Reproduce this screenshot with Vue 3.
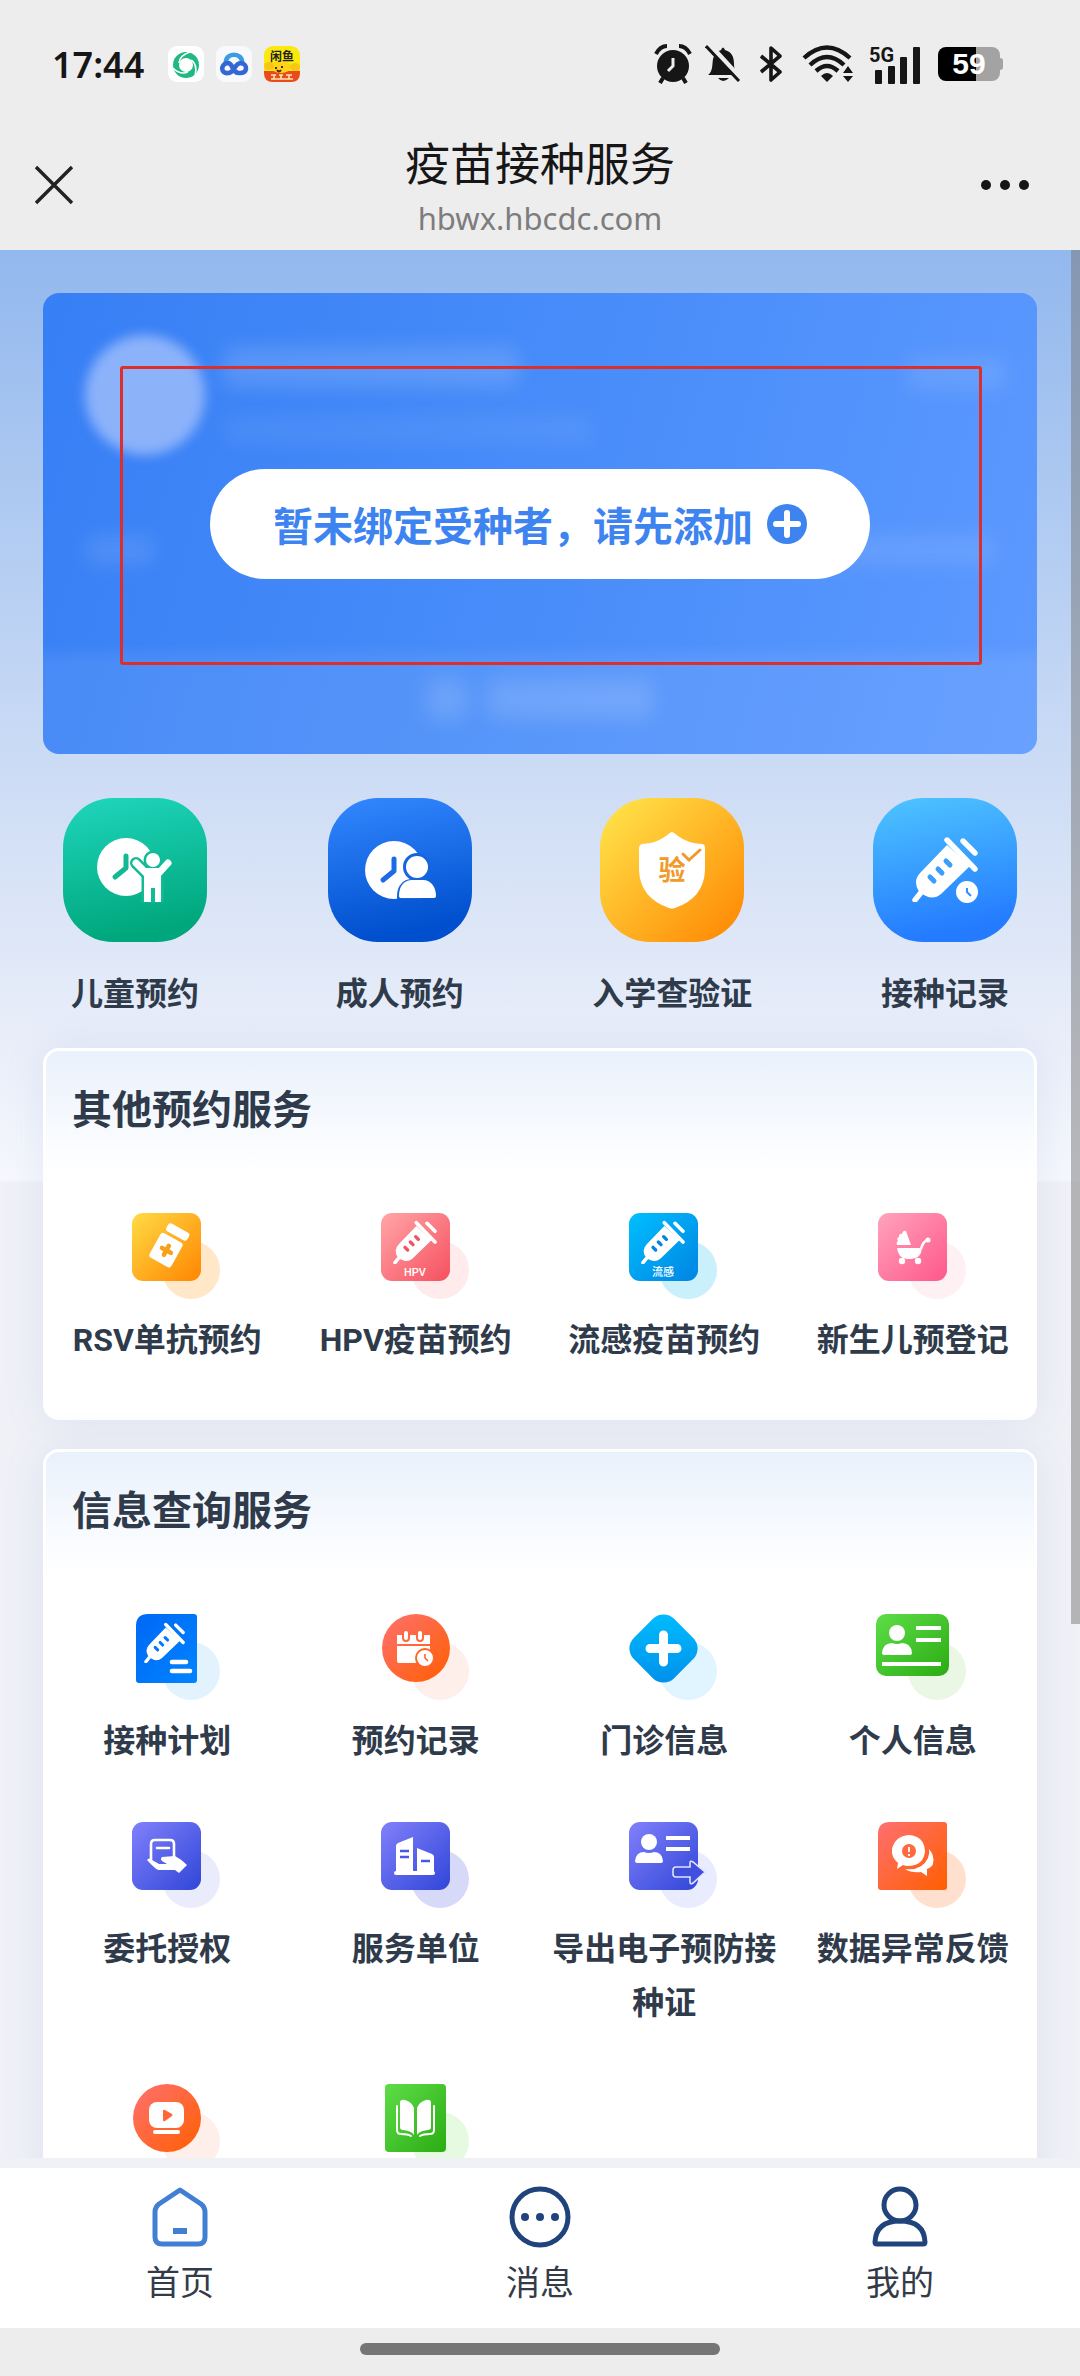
<template>
  <div class="phone">
    <header class="top">
      <div class="status-bar">
        <div class="status-left">
          <span class="time">17:44</span>
          <svg class="app-icon" viewBox="0 0 36 36">
            <rect width="36" height="36" rx="9" fill="#fff" />
            <circle cx="18" cy="19" r="10" fill="none" stroke="#1fb981" stroke-width="6" />
            <g stroke="#fff" stroke-width="1.6" fill="none">
              <path d="M11 17Q12 9 22 6" />
              <path d="M11 17Q12 9 22 6" transform="rotate(120 18 19)" />
              <path d="M11 17Q12 9 22 6" transform="rotate(240 18 19)" />
            </g>
          </svg>
          <svg class="app-icon" viewBox="0 0 36 36">
            <rect width="36" height="36" rx="9" fill="#f8f9fc" />
            <g fill="none" stroke-width="4.6" stroke-linecap="round">
              <path d="M10 17C9 6 27 6 26 17" stroke="#3d9be4" />
              <path d="M23 27C15 27 18 16 11 17C4 19 5 28 12 27C19 27 18 17 25 17C32 18 32 28 23 27" stroke="#3567d3" />
            </g>
          </svg>
          <svg class="app-icon" viewBox="0 0 36 36">
            <rect width="36" height="36" rx="9" fill="#fbe90d" />
            <path d="M0 25H36V27Q36 36 27 36H9Q0 36 0 27Z" fill="#ea4b1d" />
            <ellipse cx="17" cy="21" rx="10" ry="6" fill="#ffd21c" />
            <ellipse cx="5" cy="20" rx="5" ry="4" fill="#f8c713" />
            <ellipse cx="31" cy="21" rx="5" ry="4" fill="#f8c713" />
            <path d="M12 21v2M18 20v2M13 24q2 3 4 0" stroke="#4b2d07" stroke-width="2" fill="none" />
            <path d="M7 29h5M7 33h22M15 29h4M22 29h6M10 29v4M17 29v4M25 29v4" stroke="#ffe4b0" stroke-width="1.6" />
            <text x="18" y="15" text-anchor="middle" class="mini-text dark">闲鱼</text>
          </svg>
        </div>
        <div class="status-right">
          <svg width="38" height="40" viewBox="0 0 38 40">
            <circle cx="19" cy="22" r="16" fill="#161616" />
            <path d="M2 10Q6 2 13 2M36 10Q32 2 25 2" stroke="#161616" stroke-width="4" fill="none" />
            <path d="M9 34L6 39M29 34L32 39" stroke="#161616" stroke-width="4" />
            <path d="M19 14V22L14 27" stroke="#ededed" stroke-width="3" fill="none" />
          </svg>
          <svg width="37" height="40" viewBox="0 0 37 40">
            <path d="M3 31C8 27 7 21 8 15C10 8 14 7 16 6Q18 1 20 6C27 8 29 13 29 20C29 26 31 28 34 31Z" fill="#161616" />
            <path d="M13 34H24Q18 40 13 34Z" fill="#161616" />
            <path d="M4 0L37 36" stroke="#ededed" stroke-width="5" />
            <path d="M1 2L34 37" stroke="#161616" stroke-width="3" />
          </svg>
          <svg class="bluetooth" width="24" height="40" viewBox="0 0 24 40">
            <path d="M2 12L21 28L12 36V4L21 12L2 28" fill="none" stroke="#161616" stroke-width="3.6" stroke-linejoin="round" />
          </svg>
          <svg width="52" height="38" viewBox="0 0 52 38">
            <g fill="none" stroke="#161616" stroke-width="4.4">
              <path d="M2 13Q25 -8 48 13" />
              <path d="M8 20Q25 4 42 20" />
              <path d="M14 26Q25 16 36 26" />
            </g>
            <path d="M19 31Q25 25 31 31L25 37Z" fill="#161616" />
            <path d="M46 21L51 28H41ZM46 37L51 31H41Z" fill="#161616" />
          </svg>
          <svg width="54" height="44" viewBox="-2 -3 54 44">
            <text x="0" y="17" class="net-text">5G</text>
            <rect x="6" y="25" width="7" height="14" rx="1" fill="#161616" />
            <rect x="19" y="21" width="7" height="18" rx="1" fill="#161616" />
            <rect x="31" y="12" width="7" height="27" rx="1" fill="#161616" />
            <rect x="44" y="2" width="7" height="37" rx="1" fill="#161616" />
          </svg>
          <div class="battery"><span>59</span></div>
        </div>
      </div>
      <div class="nav-bar">
        <button class="nav-btn" aria-label="关闭">
          <svg width="40" height="40" viewBox="0 0 40 40">
            <path d="M2 2L38 38M38 2L2 38" stroke="#222" stroke-width="3.4" />
          </svg>
        </button>
        <div class="page-title">
          <h1>疫苗接种服务</h1>
          <p>hbwx.hbcdc.com</p>
        </div>
        <button class="nav-btn" aria-label="更多">
          <svg width="54" height="12" viewBox="-4 0 54 12">
            <circle cx="6" cy="6" r="5" fill="#161616" />
            <circle cx="25" cy="6" r="5" fill="#161616" />
            <circle cx="44" cy="6" r="5" fill="#161616" />
          </svg>
        </button>
      </div>
    </header>

    <main class="content">
      <section class="bind-card">
        <div class="card-blur" aria-hidden="true">
          <div class="blur-head">
            <i class="avatar"></i>
            <div class="blur-lines">
              <i class="line-title"></i>
              <i class="line-sub"></i>
            </div>
            <i class="line-switch"></i>
          </div>
          <div class="blur-mid">
            <i></i>
            <i class="long"></i>
          </div>
          <div class="blur-foot">
            <i class="foot-icon"></i>
            <i class="foot-text"></i>
          </div>
        </div>
        <button class="bind-btn">
          <span>暂未绑定受种者，请先添加</span>
          <svg width="40" height="40" viewBox="0 0 40 40">
            <circle cx="20" cy="20" r="20" fill="#3d84f0" />
            <path d="M20 9V31M9 20H31" stroke="#fff" stroke-width="6" stroke-linecap="round" />
          </svg>
        </button>
        <div class="mark-box"></div>
      </section>

      <section class="features">
        <button v-for="item in features" :key="item.icon" class="feature">
          <svg width="144" height="144" viewBox="0 0 144 144">
            <defs>
              <linearGradient :id="'f-' + item.icon" :x2="item.diagonal ? 1 : 0.2" y2="1">
                <stop :stop-color="item.from" />
                <stop offset="1" :stop-color="item.to" />
              </linearGradient>
            </defs>
            <rect width="144" height="144" rx="50" :fill="`url(#f-${item.icon})`" />
            <template v-if="item.icon === 'child'">
              <circle cx="63" cy="69" r="29" fill="#fff" />
              <path d="M63 58V70L52 79" class="hand" stroke="#16b893" />
              <g fill="#11bb96" stroke="#11bb96" stroke-width="5">
                <circle cx="90" cy="62" r="7" />
                <path d="M81 72V102H98V72Z" />
                <path d="M73 65L84 76" stroke-width="12" stroke-linecap="round" />
              </g>
              <circle cx="90" cy="62" r="7" fill="#fff" />
              <path d="M82 70H98V104H92V90H88V104H81V72Z" fill="#fff" />
              <path d="M73 65L84 76M105 65L95 76" stroke="#fff" stroke-width="7" stroke-linecap="round" />
            </template>
            <template v-else-if="item.icon === 'adult'">
              <circle cx="66" cy="72" r="29" fill="#fff" />
              <path d="M66 61V73L55 82" class="hand" stroke="#1b6ae6" />
              <g stroke="#1764df" stroke-width="6" fill="#1764df">
                <circle cx="89" cy="69" r="11" />
                <path d="M72 98C72 88 78 84 84 84H90V98Z" />
              </g>
              <g fill="#fff">
                <circle cx="89" cy="69" r="11" />
                <path d="M71 98C71 87 77 82 84 82H95C103 82 108 89 108 98Q108 100 105 100H74Q71 100 71 98Z" />
              </g>
            </template>
            <template v-else-if="item.icon === 'shield'">
              <path d="M72 34Q73 34 78 38Q87 45 102 46Q105 46 105 50V72Q104 100 75 110Q72 111 69 110Q40 100 39 72V50Q39 47 42 46Q57 45 66 38Q71 34 72 34Z" fill="#fff" />
              <text x="72" y="82" text-anchor="middle" class="shield-text">验</text>
              <path d="M83 56L89 62L100 52" fill="none" stroke="#f09a2b" stroke-width="3" stroke-linecap="round" />
            </template>
            <template v-else>
              <use href="#syringe" x="39" y="38" width="66" height="66" color="#3a9eff" />
              <circle cx="94" cy="94" r="11" fill="#fff" />
              <path d="M94 90V94L98 98" stroke="#3390ff" stroke-width="2" fill="none" />
            </template>
          </svg>
          <span>{{ item.label }}</span>
        </button>
      </section>

      <section v-for="panel in panels" :key="panel.title" class="panel">
        <h2>{{ panel.title }}</h2>
        <div class="grid">
          <button v-for="item in panel.items" :key="item.icon" class="grid-item">
            <svg width="128" height="100" viewBox="-29 0 128 100">
              <defs>
                <linearGradient :id="'g-' + item.icon" x2="1" y2="1">
                  <stop :stop-color="item.from" />
                  <stop offset="1" :stop-color="item.to" />
                </linearGradient>
              </defs>
              <circle cx="59" cy="57" r="29" :fill="item.shade" />
              <circle v-if="item.shape === 'circle'" cx="35" cy="34" r="34" :fill="`url(#g-${item.icon})`" />
              <rect v-else-if="item.shape === 'diamond'" x="6" y="6" width="57" height="57" rx="15" transform="rotate(45 34.5 34.5)" :fill="`url(#g-${item.icon})`" />
              <path v-else-if="item.shape === 'page'" d="M16 0H62Q65 0 65 3V66Q65 69 62 69H7Q4 69 4 66V12Q4 0 16 0Z" :fill="`url(#g-${item.icon})`" />
              <path v-else-if="item.shape === 'fold'" d="M12 0H66Q69 0 69 3V65Q69 68 66 68H3Q0 68 0 65V12Q0 0 12 0Z" :fill="`url(#g-${item.icon})`" />
              <rect v-else-if="item.shape === 'book'" x="4" width="61" height="68" rx="4" :fill="`url(#g-${item.icon})`" />
              <rect v-else-if="item.shape === 'wide'" x="-2" width="73" height="62" rx="10" :fill="`url(#g-${item.icon})`" />
              <rect v-else width="69" height="68" rx="11" :fill="`url(#g-${item.icon})`" />

              <g v-if="item.icon === 'bottle'" transform="rotate(29 34 36)" fill="#fff">
                <rect x="24" y="11" width="24" height="9" rx="3" />
                <rect x="22" y="23" width="25" height="28" rx="3" />
                <path d="M35 32V42M30 37H40" stroke="#f7a01b" stroke-width="4.6" stroke-linecap="round" />
              </g>
              <g v-else-if="item.icon === 'hpv' || item.icon === 'flu'">
                <use href="#syringe" x="12" y="7" width="44" height="44" :color="item.to" />
                <text x="34" y="63" text-anchor="middle" class="mini-text">{{ item.tag }}</text>
              </g>
              <g v-else-if="item.icon === 'baby'" fill="#fff">
                <path d="M28 18L33 32H19Q18 29 20 28Q18 25 21 24Q21 20 24 21Q25 17 28 18Z" />
                <path d="M19 35H44Q43 46 33 46H29Q20 45 19 35Z" />
                <path d="M43 36Q45 28 50 27" fill="none" stroke="#fff" stroke-width="2.5" />
                <circle cx="50" cy="27" r="2.5" />
                <circle cx="24" cy="48" r="3.2" />
                <circle cx="40" cy="48" r="3.2" />
              </g>
              <g v-else-if="item.icon === 'plan'">
                <use href="#syringe" x="12" y="8" width="41" height="41" color="#0077ff" />
                <path d="M40 48H54M40 57H58" stroke="#fff" stroke-width="4.6" stroke-linecap="round" />
              </g>
              <g v-else-if="item.icon === 'record'">
                <path d="M16 21H49V30H16ZM16 32H49V46Q49 49 46 49H18Q16 49 16 47Z" fill="#fff" />
                <path d="M25 19V24M39 19V24" stroke="#ff6845" stroke-width="8" stroke-linecap="round" />
                <path d="M25 19V24M39 19V24" stroke="#fff" stroke-width="4" stroke-linecap="round" />
                <circle cx="44" cy="44" r="9" fill="#fff" stroke="#ff6428" stroke-width="2" />
                <path d="M44 40V44L47 47" fill="none" stroke="#ff6428" stroke-width="1.6" />
              </g>
              <path v-else-if="item.icon === 'clinic'" d="M34.5 21V48M21 34.5H48" stroke="#fff" stroke-width="9" stroke-linecap="round" />
              <g v-else-if="item.icon === 'person'">
                <circle cx="19" cy="19" r="8" fill="#fff" />
                <path d="M4 39Q5 29 14 29Q19 31 24 29Q33 29 34 39Q34 41 31 41H7Q4 41 4 39Z" fill="#fff" />
                <path d="M38 14H63M38 26H63M4 50H63" stroke="#fff" stroke-width="4" />
              </g>
              <g v-else-if="item.icon === 'authorize'">
                <path d="M19 39V22Q19 18 23 18H38Q42 18 42 22V38" fill="none" stroke="#fff" stroke-width="2.6" />
                <path d="M25 26H37" stroke="#fff" stroke-width="2.6" stroke-linecap="round" />
                <path d="M15 38Q17 35 20 38L27 42H35L30 39Q28 37 30 35L43 34Q49 37 55 43L47 51L43 48H27Q24 48 15 38Z" fill="#fff" />
              </g>
              <g v-else-if="item.icon === 'unit'">
                <path d="M15 50V24Q15 22 17 21L32 15V50ZM36 50V26L51 32Q53 33 53 35V50Z" fill="#fff" />
                <rect x="13" y="49" width="41" height="4" rx="2" fill="#fff" />
                <path d="M19 29H28M19 35H28M40 39H49" stroke="#4a59e4" stroke-width="2.5" />
              </g>
              <g v-else-if="item.icon === 'export'">
                <circle cx="20" cy="20" r="8" fill="#fff" />
                <path d="M6 39Q7 30 15 30Q20 32 25 30Q33 30 34 39Q34 41 31 41H9Q6 41 6 39Z" fill="#fff" />
                <path d="M37 16H61M37 27H61" stroke="#fff" stroke-width="4" />
                <path d="M47 45H61V41Q61 38 64 40L76 50L64 61Q61 63 61 60V55H47Q44 55 44 52V48Q44 45 47 45Z" fill="#414fde" stroke="#dfe3ff" stroke-width="1.6" />
              </g>
              <g v-else-if="item.icon === 'feedback'">
                <path d="M51 27Q57 34 55 42Q54 45 49 47V54L43 50Q33 51 27 47Q44 49 50 36Q52 31 51 27Z" fill="#fff" />
                <path d="M19 47L20 41Q13 35 14 27Q17 14 31 13Q46 14 47 29Q46 43 31 44Q27 44 25 43Z" fill="#fff" />
                <circle cx="31" cy="29" r="7" fill="#ff6840" />
                <path d="M31 25V30M31 32V34" stroke="#fff" stroke-width="1.8" />
              </g>
              <g v-else-if="item.icon === 'video'">
                <rect x="17" y="18" width="35" height="26" rx="8" fill="#fff" />
                <path d="M31 27V36Q31 38 33 37L40 32Q41 31 40 30L33 26Q31 25 31 27Z" fill="#ff6638" />
                <path d="M23 48H46" stroke="#fff" stroke-width="4" stroke-linecap="round" />
              </g>
              <g v-else-if="item.icon === 'book'">
                <path d="M19 19Q19 15 24 16Q31 18 33 24V51Q31 47 22 46Q19 46 19 43ZM50 19Q50 15 45 16Q38 18 36 24V51Q38 47 47 46Q50 46 50 43Z" fill="#fff" />
                <path d="M16 22V46Q16 50 20 50Q27 50 30 52M53 22V46Q53 50 49 50Q42 50 39 52" fill="none" stroke="#fff" stroke-width="2" stroke-linecap="round" />
              </g>
            </svg>
            <span v-if="item.label">{{ item.label }}</span>
          </button>
        </div>
      </section>
      <div class="scroll-thumb"></div>
    </main>

    <nav class="tab-bar">
      <a href="#home">
        <svg width="62" height="62" viewBox="0 0 62 62" fill="none" stroke="#417fd3" stroke-width="5" stroke-linejoin="round">
          <path d="M31 4L52 18Q56 21 56 26V51Q56 58 49 58H13Q6 58 6 51V26Q6 21 10 18Z" />
          <path d="M24 45H38" stroke-width="6" />
        </svg>
        <span>首页</span>
      </a>
      <a href="#message">
        <svg width="62" height="62" viewBox="0 0 62 62">
          <circle cx="31" cy="31" r="28" fill="none" stroke="#1f437a" stroke-width="5" />
          <g fill="#1f437a">
            <circle cx="16" cy="31" r="4" />
            <circle cx="31" cy="31" r="4" />
            <circle cx="46" cy="31" r="4" />
          </g>
        </svg>
        <span>消息</span>
      </a>
      <a href="#mine">
        <svg width="62" height="62" viewBox="0 0 62 62" fill="none" stroke="#1f437a" stroke-width="5" stroke-linejoin="round">
          <circle cx="31" cy="19" r="16" />
          <path d="M6 56Q7 35 31 35Q55 35 56 56Q56 58 54 58H8Q6 58 6 56Z" />
        </svg>
        <span>我的</span>
      </a>
    </nav>
    <div class="home-indicator"><i></i></div>

    <!-- 公用针筒图形 -->
    <svg class="sprite" width="0" height="0" aria-hidden="true">
      <symbol id="syringe" viewBox="0 0 66 66">
        <path d="M35 9L58 30L29 58Q22 64 14 60Q4 56 4 46Q4 41 9 36Z" fill="#fff" />
        <path d="M35 4L63 33M51 5L63 17M3 64L11 54" stroke="#fff" stroke-width="5.4" stroke-linecap="round" />
        <path d="M18 41L22 45M26 33L30 37M34 25L38 29" stroke="currentColor" stroke-width="5" stroke-linecap="round" />
      </symbol>
    </svg>
  </div>
</template>

<script setup>
const features = [
  { icon: 'child', label: '儿童预约', from: '#1fd6bd', to: '#00a77c' },
  { icon: 'adult', label: '成人预约', from: '#3388ff', to: '#004fce' },
  { icon: 'shield', label: '入学查验证', from: '#ffe84d', to: '#ff8400', diagonal: true },
  { icon: 'record-syringe', label: '接种记录', from: '#4ec5ff', to: '#247bff' },
]

const panels = [
  {
    title: '其他预约服务',
    items: [
      { icon: 'bottle', label: 'RSV单抗预约', from: '#ffdb45', to: '#ff8500', shade: '#ffe7c8' },
      { icon: 'hpv', label: 'HPV疫苗预约', tag: 'HPV', from: '#ffa6a8', to: '#f6505f', shade: '#ffeaec' },
      { icon: 'flu', label: '流感疫苗预约', tag: '流感', from: '#00bfff', to: '#0084e2', shade: '#caf0fc' },
      { icon: 'baby', label: '新生儿预登记', from: '#ffa4bc', to: '#ff5789', shade: '#fff0f3' },
    ],
  },
  {
    title: '信息查询服务',
    items: [
      { icon: 'plan', shape: 'page', label: '接种计划', from: '#0068f5', to: '#0084ff', shade: '#e2f3fe' },
      { icon: 'record', shape: 'circle', label: '预约记录', from: '#ff7070', to: '#ff5f00', shade: '#ffefeb' },
      { icon: 'clinic', shape: 'diamond', label: '门诊信息', from: '#00bfff', to: '#008de9', shade: '#e0f5ff' },
      { icon: 'person', shape: 'wide', label: '个人信息', from: '#5edd48', to: '#2bac12', shade: '#e9f7e4' },
      { icon: 'authorize', label: '委托授权', from: '#8180fb', to: '#3046d8', shade: '#eaecfb' },
      { icon: 'unit', label: '服务单位', from: '#8180fb', to: '#3046d8', shade: '#d6daf8' },
      { icon: 'export', label: '导出电子预防接种证', from: '#8180fb', to: '#3046d8', shade: '#e9ecff' },
      { icon: 'feedback', shape: 'fold', label: '数据异常反馈', from: '#ff6f70', to: '#ff5f00', shade: '#ffe0ce' },
      { icon: 'video', shape: 'circle', from: '#ff7070', to: '#ff5f00', shade: '#ffefeb' },
      { icon: 'book', shape: 'book', from: '#5edd48', to: '#2bac12', shade: '#e6fae1' },
    ],
  },
]
</script>

<style>
body {
  background: #ededed;
}
</style>

<style scoped>
.phone {
  display: flex;
  flex-direction: column;
  height: 100vh;
  overflow: hidden;
  background: #f0f1f7;
  color: #2f3b4b;
  font-family: Roboto, 'Noto Sans CJK SC', sans-serif;
}

button {
  padding: 0;
  border: 0;
  background: none;
  color: inherit;
  font: inherit;
}

h1,
h2,
p {
  margin: 0;
}

svg {
  display: block;
  flex: none;
}

.top {
  flex: none;
  background: #ededed;
  color: #161616;
}

.status-bar {
  display: flex;
  justify-content: space-between;
  align-items: center;
  height: 128px;
  padding: 0 80px 0 52px;
}

.status-left,
.status-right {
  display: flex;
  align-items: center;
}

.status-left {
  gap: 12px;
}

.status-right {
  gap: 13px;
}

.bluetooth {
  margin: 0 6px 0 4px;
}

.time {
  margin-right: 12px;
  font: 600 36px 'Noto Sans', sans-serif;
}

.app-icon {
  width: 36px;
  height: 36px;
}

.mini-text {
  fill: #fff;
  font-size: 11px;
  font-weight: 500;
}

.mini-text.dark {
  fill: #222;
  font-size: 12px;
  font-weight: 700;
}

.net-text {
  fill: #161616;
  font-size: 20px;
  font-weight: 700;
}

.battery {
  position: relative;
  width: 62px;
  height: 34px;
  margin-left: 4px;
  border-radius: 8px;
  background: linear-gradient(90deg, #000 62%, #a3a3a3 62%);
  color: #fff;
  font: 700 30px/34px 'Liberation Sans', sans-serif;
  text-align: center;
}

.battery::after {
  position: absolute;
  top: 11px;
  right: -3px;
  width: 3px;
  height: 12px;
  border-radius: 0 3px 3px 0;
  background: #a3a3a3;
  content: '';
}

.nav-bar {
  display: flex;
  justify-content: space-between;
  align-items: center;
  box-sizing: border-box;
  height: 122px;
  padding: 0 34px 8px;
}

.nav-btn {
  display: flex;
  width: 70px;
  height: 52px;
  align-items: center;
}

.page-title {
  padding-top: 6px;
  text-align: center;
}

.page-title h1 {
  font-size: 45px;
  font-weight: 400;
  line-height: 60px;
}

.page-title p {
  color: #7d7d7d;
  font: 31px/44px 'Noto Sans', sans-serif;
}

.content {
  position: relative;
  flex: 1;
  min-height: 0;
  margin-bottom: 10px;
  padding: 43px 43px 0;
  overflow: hidden;
  background: linear-gradient(#92b8ee, #ccdcf5 520px, #e8edf9 780px, #f6f8fd 930px, transparent 932px);
}

.bind-card {
  position: relative;
  display: flex;
  justify-content: center;
  align-items: center;
  height: 461px;
  overflow: hidden;
  border-radius: 16px;
  background: linear-gradient(105deg, #377ff5, #468bf9 45%, #5c99ff);
}

.card-blur {
  position: absolute;
  inset: 0;
  display: flex;
  flex-direction: column;
  justify-content: space-between;
}

.card-blur i {
  border-radius: 8px;
  background: rgba(255, 255, 255, 0.14);
  filter: blur(10px);
}

.blur-head {
  display: flex;
  gap: 18px;
  padding: 42px 30px 0 42px;
}

.card-blur .avatar {
  width: 120px;
  height: 120px;
  border-radius: 50%;
  background: #8cb2fa;
  filter: blur(6px);
}

.blur-lines {
  display: flex;
  flex: 1;
  flex-direction: column;
  gap: 28px;
  padding-top: 12px;
}

.line-title {
  width: 296px;
  height: 40px;
}

.card-blur .line-sub {
  width: 370px;
  height: 30px;
  background: rgba(255, 255, 255, 0.06);
}

.card-blur .line-switch {
  width: 100px;
  height: 34px;
  margin-top: 22px;
  background: rgba(255, 255, 255, 0.1);
}

.blur-mid {
  display: flex;
  justify-content: space-between;
  padding: 0 42px;
}

.card-blur .blur-mid i {
  width: 70px;
  height: 30px;
  background: rgba(255, 255, 255, 0.1);
}

.card-blur .blur-mid .long {
  width: 240px;
}

.blur-foot {
  display: flex;
  gap: 20px;
  justify-content: center;
  align-items: center;
  height: 110px;
  background: linear-gradient(rgba(255, 255, 255, 0), rgba(255, 255, 255, 0.08) 20px);
}

.foot-icon {
  width: 40px;
  height: 40px;
}

.foot-text {
  width: 166px;
  height: 40px;
}

.bind-btn {
  position: relative;
  display: flex;
  gap: 14px;
  align-items: center;
  height: 110px;
  padding: 0 63px;
  border-radius: 55px;
  background: #fff;
  color: #3d84f0;
  font-size: 40px;
  font-weight: 700;
}

.mark-box {
  position: absolute;
  inset: 73px 55px 89px 77px;
  border: 3px solid #dc2f2c;
  border-radius: 3px;
  pointer-events: none;
}

.features {
  display: flex;
  justify-content: space-between;
  padding: 44px 20px 27px;
}

.feature {
  display: flex;
  flex-direction: column;
  gap: 25px;
  align-items: center;
  font-size: 32px;
  font-weight: 700;
  line-height: 54px;
}

.hand {
  fill: none;
  stroke-width: 5;
  stroke-linecap: round;
  stroke-linejoin: round;
}

.shield-text {
  fill: #f09a2b;
  font-size: 27px;
  font-weight: 700;
}

.panel {
  margin-bottom: 29px;
  border: 3px solid #fff;
  border-radius: 16px;
  background: linear-gradient(#e9f1fc, #fff 120px);
  box-shadow: 0 0 40px rgba(120, 140, 200, 0.14);
}

.panel h2 {
  padding: 30px 26px 40px;
  font-size: 40px;
  font-weight: 700;
  line-height: 60px;
}

.grid {
  display: grid;
  grid-template-columns: repeat(4, 1fr);
  row-gap: 4px;
  margin: 32px -3px 0;
}

.grid-item {
  display: flex;
  flex-direction: column;
  align-items: center;
  padding: 0 10px 50px;
  font-size: 32px;
  font-weight: 700;
  line-height: 54px;
  text-align: center;
}

.scroll-thumb {
  position: absolute;
  top: 0;
  right: 0;
  width: 9px;
  height: 72%;
  background: rgba(120, 120, 120, 0.5);
}

.tab-bar {
  display: flex;
  flex: none;
  height: 160px;
  background: #fff;
}

.tab-bar a {
  display: flex;
  flex: 1;
  flex-direction: column;
  gap: 10px;
  align-items: center;
  padding-top: 18px;
  color: #333b48;
  font-size: 34px;
  line-height: 50px;
  text-decoration: none;
}

.home-indicator {
  display: flex;
  flex: none;
  justify-content: center;
  align-items: center;
  height: 48px;
  background: #ededed;
}

.home-indicator i {
  width: 360px;
  height: 12px;
  margin-bottom: 6px;
  border-radius: 6px;
  background: #757575;
}

.sprite {
  position: absolute;
}
</style>
